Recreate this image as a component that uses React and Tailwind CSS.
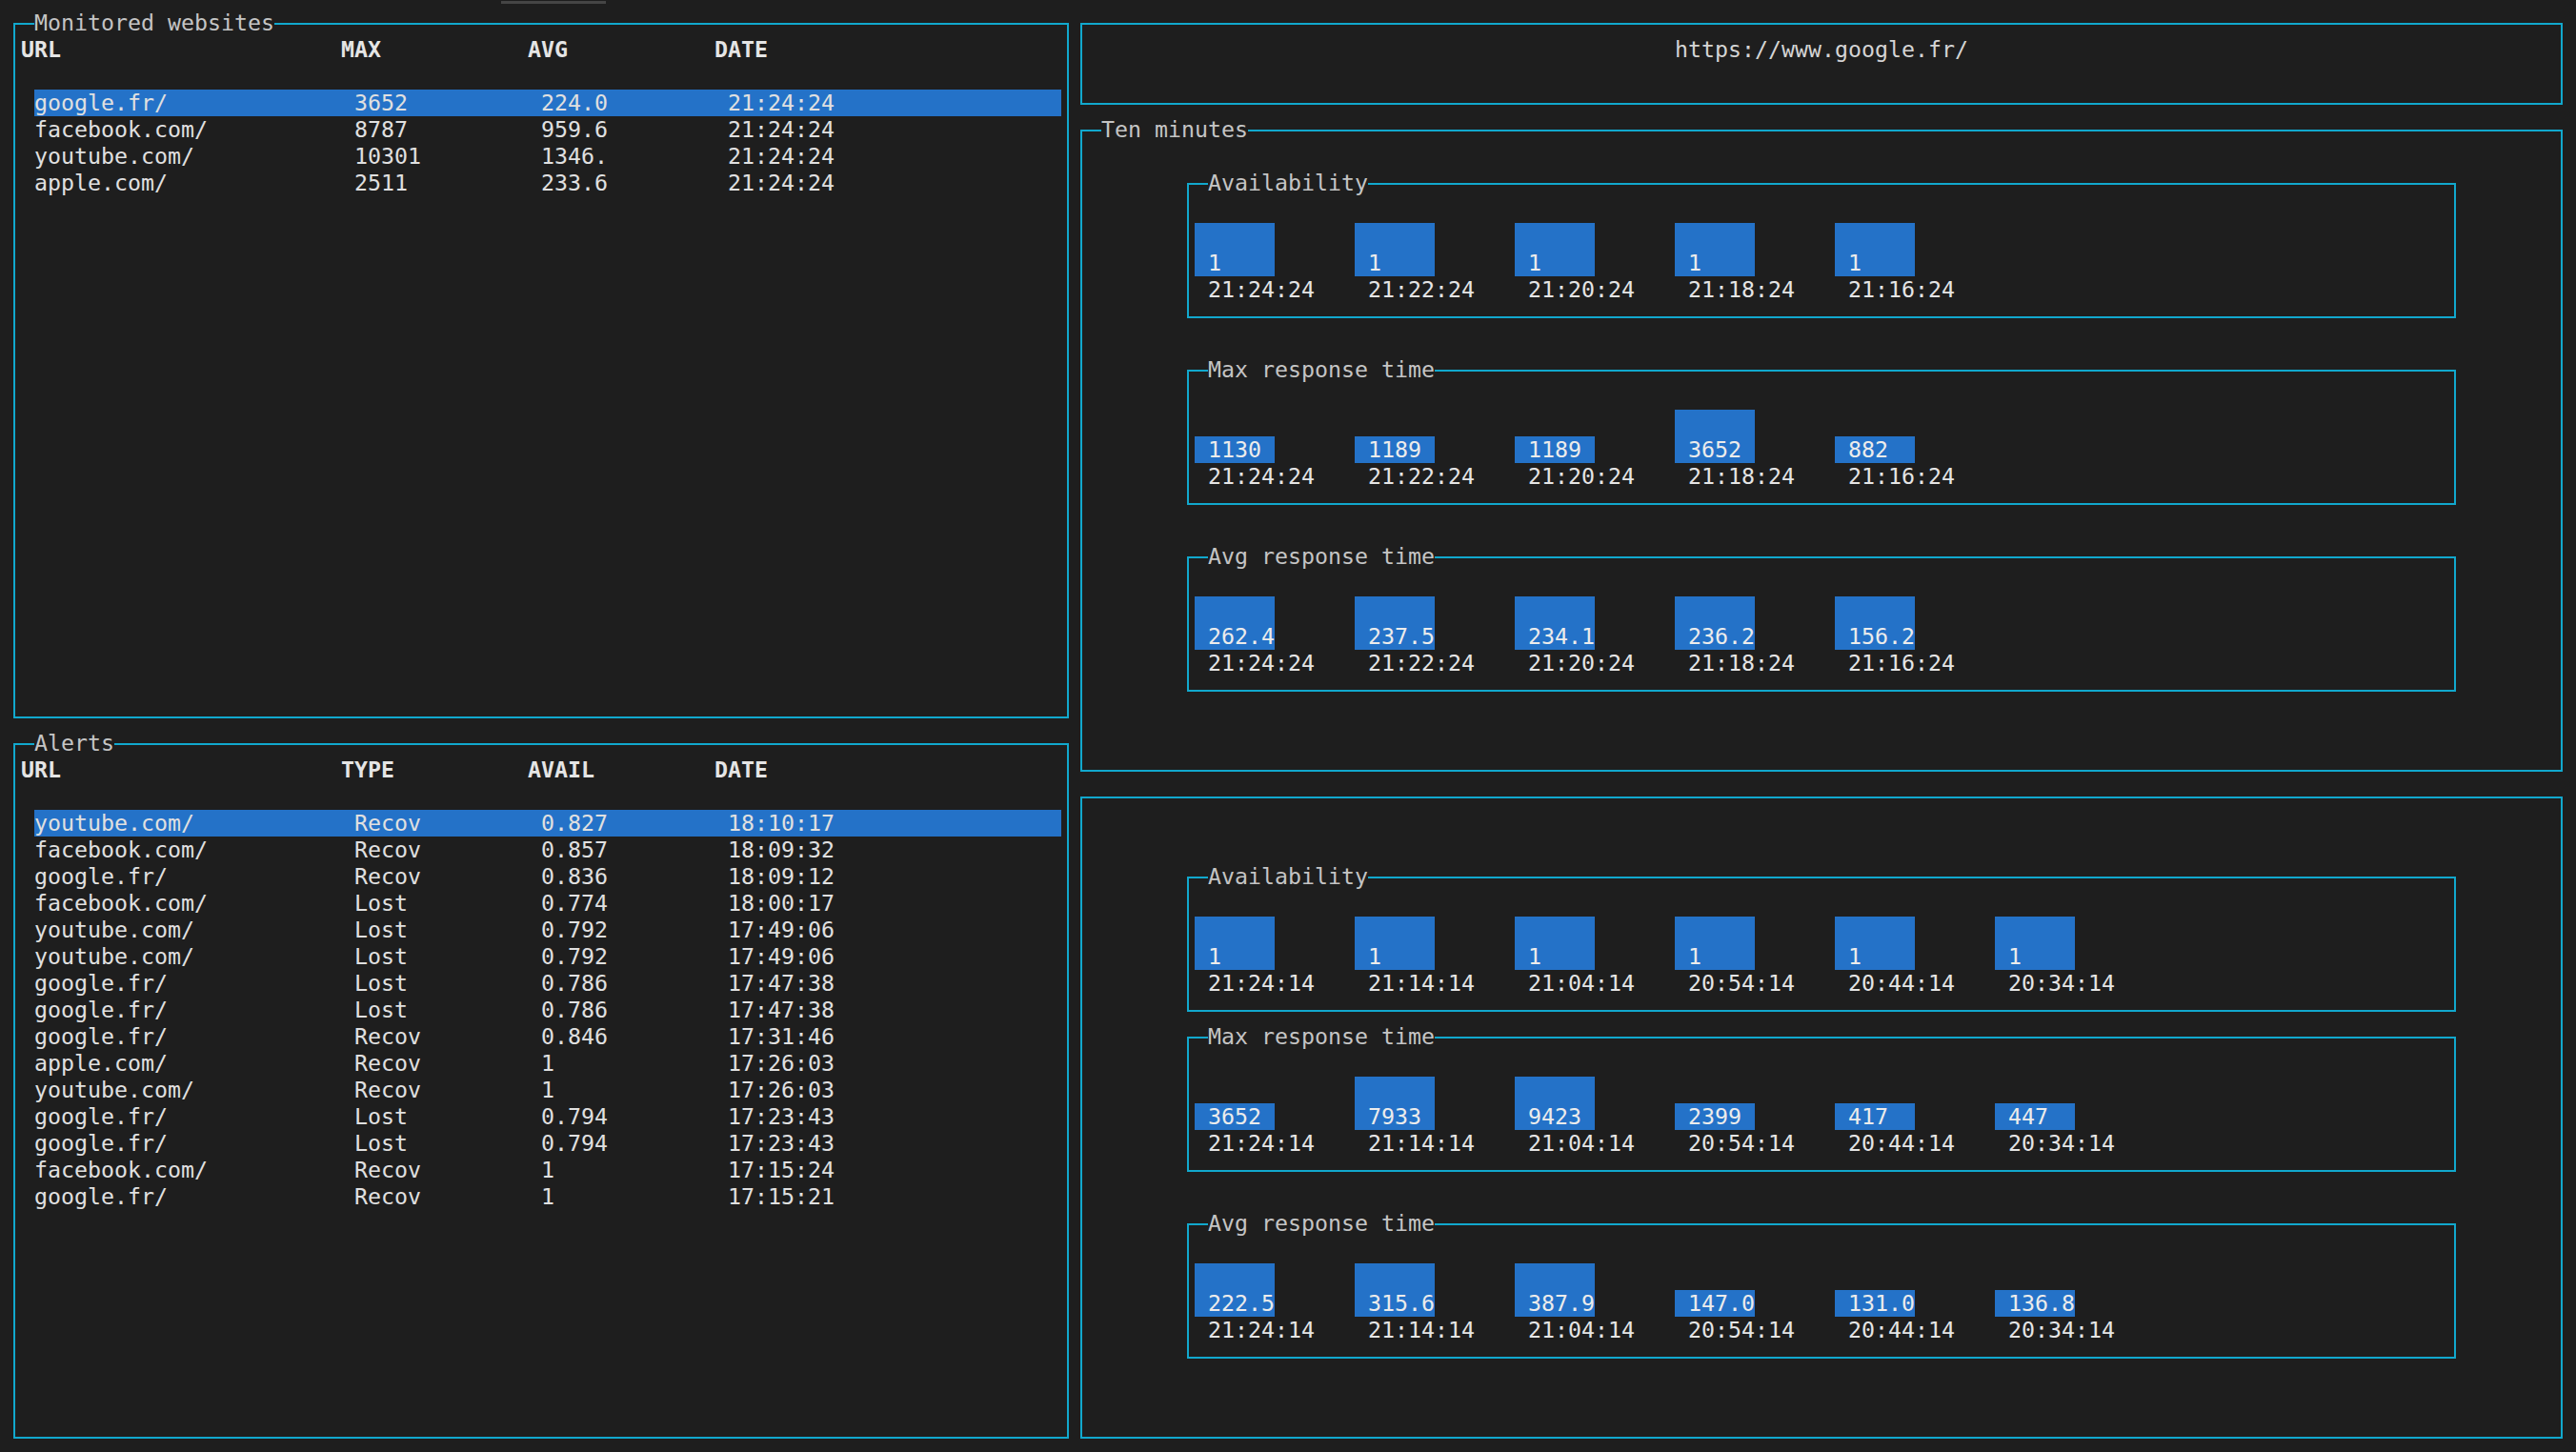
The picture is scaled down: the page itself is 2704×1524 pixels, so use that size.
import React from "react";

// terminal cell: 14px x 28px
const websites = [
  ["google.fr/", "3652", "224.0", "21:24:24"],
  ["facebook.com/", "8787", "959.6", "21:24:24"],
  ["youtube.com/", "10301", "1346.", "21:24:24"],
  ["apple.com/", "2511", "233.6", "21:24:24"],
];

const alerts = [
  ["youtube.com/", "Recov", "0.827", "18:10:17"],
  ["facebook.com/", "Recov", "0.857", "18:09:32"],
  ["google.fr/", "Recov", "0.836", "18:09:12"],
  ["facebook.com/", "Lost", "0.774", "18:00:17"],
  ["youtube.com/", "Lost", "0.792", "17:49:06"],
  ["youtube.com/", "Lost", "0.792", "17:49:06"],
  ["google.fr/", "Lost", "0.786", "17:47:38"],
  ["google.fr/", "Lost", "0.786", "17:47:38"],
  ["google.fr/", "Recov", "0.846", "17:31:46"],
  ["apple.com/", "Recov", "1", "17:26:03"],
  ["youtube.com/", "Recov", "1", "17:26:03"],
  ["google.fr/", "Lost", "0.794", "17:23:43"],
  ["google.fr/", "Lost", "0.794", "17:23:43"],
  ["facebook.com/", "Recov", "1", "17:15:24"],
  ["google.fr/", "Recov", "1", "17:15:21"],
];

const tenLabels = ["21:24:24", "21:22:24", "21:20:24", "21:18:24", "21:16:24"];
const hourLabels = ["21:24:14", "21:14:14", "21:04:14", "20:54:14", "20:44:14", "20:34:14"];

const tenMinutes = [
  { title: "Availability", values: ["1", "1", "1", "1", "1"], rows: [2, 2, 2, 2, 2] },
  { title: "Max response time", values: ["1130", "1189", "1189", "3652", "882"], rows: [1, 1, 1, 2, 1] },
  { title: "Avg response time", values: ["262.4", "237.5", "234.1", "236.2", "156.2"], rows: [2, 2, 2, 2, 2] },
];

const lastHour = [
  { title: "Availability", values: ["1", "1", "1", "1", "1", "1"], rows: [2, 2, 2, 2, 2, 2] },
  { title: "Max response time", values: ["3652", "7933", "9423", "2399", "417", "447"], rows: [1, 2, 2, 1, 1, 1] },
  { title: "Avg response time", values: ["222.5", "315.6", "387.9", "147.0", "131.0", "136.8"], rows: [2, 2, 2, 1, 1, 1] },
];

const Box = ({ title, className = "", children }) => (
  <div className={`flex flex-col border-2 border-[#11a8cd] ${className}`}>
    {title ? (
      <div className="-mt-[16px] ml-[20px] self-start whitespace-pre bg-[#1e1e1e] text-[#c4c4c4]">
        {title}
      </div>
    ) : (
      <div className="h-[12px]" />
    )}
    <div className="pl-[6px]">{children}</div>
  </div>
);

const Table = ({ head, rows }) => (
  <div className="flex flex-col">
    <div className="grid grid-cols-[336px_196px_196px_1fr] font-bold text-[#e5e5e5]">
      {head.map((h) => (
        <span key={h}>{h}</span>
      ))}
    </div>
    <div className="h-[28px]" />
    {rows.map((r, i) => (
      <div
        key={i}
        className={`ml-[14px] grid w-[1078px] grid-cols-[336px_196px_196px_1fr] whitespace-pre text-[#e0e0e0] ${
          i === 0 ? "bg-[#2472c8]" : ""
        }`}
      >
        {r.map((c, j) => (
          <span key={j}>{c}</span>
        ))}
      </div>
    ))}
  </div>
);

const Bar = ({ value, rows, label }) => (
  <div className="flex w-[84px] flex-col">
    <div className="flex h-[56px] flex-col justify-end">
      <div className={`flex flex-col justify-end bg-[#2472c8] ${rows === 2 ? "h-[56px]" : "h-[28px]"}`}>
        <span className="whitespace-nowrap pl-[14px] text-[#ececec]">{value}</span>
      </div>
    </div>
    <span className="whitespace-nowrap pl-[14px] text-[#e5e5e5]">{label}</span>
  </div>
);

const Chart = ({ chart, labels, className = "" }) => (
  <Box title={chart.title} className={`ml-[104px] h-[142px] w-[1332px] ${className}`}>
    <div className="flex gap-[84px] pt-[28px]">
      {chart.values.map((v, i) => (
        <Bar key={i} value={v} rows={chart.rows[i]} label={labels[i]} />
      ))}
    </div>
  </Box>
);

export default function App() {
  return (
    <div className="h-[1524px] w-[2704px] overflow-hidden bg-[#1e1e1e] font-['DejaVu_Sans_Mono',monospace] text-[23.25px] leading-[28px] text-[#cccccc]">
      <div className="h-[24px] pt-[1px]">
        <div className="ml-[526px] h-[3px] w-[110px] bg-[#454545]" />
      </div>

      <div className="flex gap-[12px] pl-[14px]">
        {/* left column */}
        <div className="flex w-[1108px] flex-col gap-[26px]">
          <Box title="Monitored websites" className="h-[730px]">
            <Table head={["URL", "MAX", "AVG", "DATE"]} rows={websites} />
          </Box>
          <Box title="Alerts" className="h-[730px]">
            <Table head={["URL", "TYPE", "AVAIL", "DATE"]} rows={alerts} />
          </Box>
        </div>

        {/* right column */}
        <div className="flex w-[1556px] flex-col gap-[26px]">
          <Box className="h-[86px]">
            <div className="w-[1540px] text-center text-[#d4d4d4]">https://www.google.fr/</div>
          </Box>

          <Box title="Ten minutes" className="h-[674px]">
            <div className="flex flex-col gap-[54px] pt-[42px]">
              {tenMinutes.map((c) => (
                <Chart key={c.title} chart={c} labels={tenLabels} />
              ))}
            </div>
          </Box>

          <Box className="h-[674px]">
            <div className="flex flex-col pt-[70px]">
              <Chart chart={lastHour[0]} labels={hourLabels} />
              <Chart chart={lastHour[1]} labels={hourLabels} className="mt-[26px]" />
              <Chart chart={lastHour[2]} labels={hourLabels} className="mt-[54px]" />
            </div>
          </Box>
        </div>
      </div>
    </div>
  );
}
